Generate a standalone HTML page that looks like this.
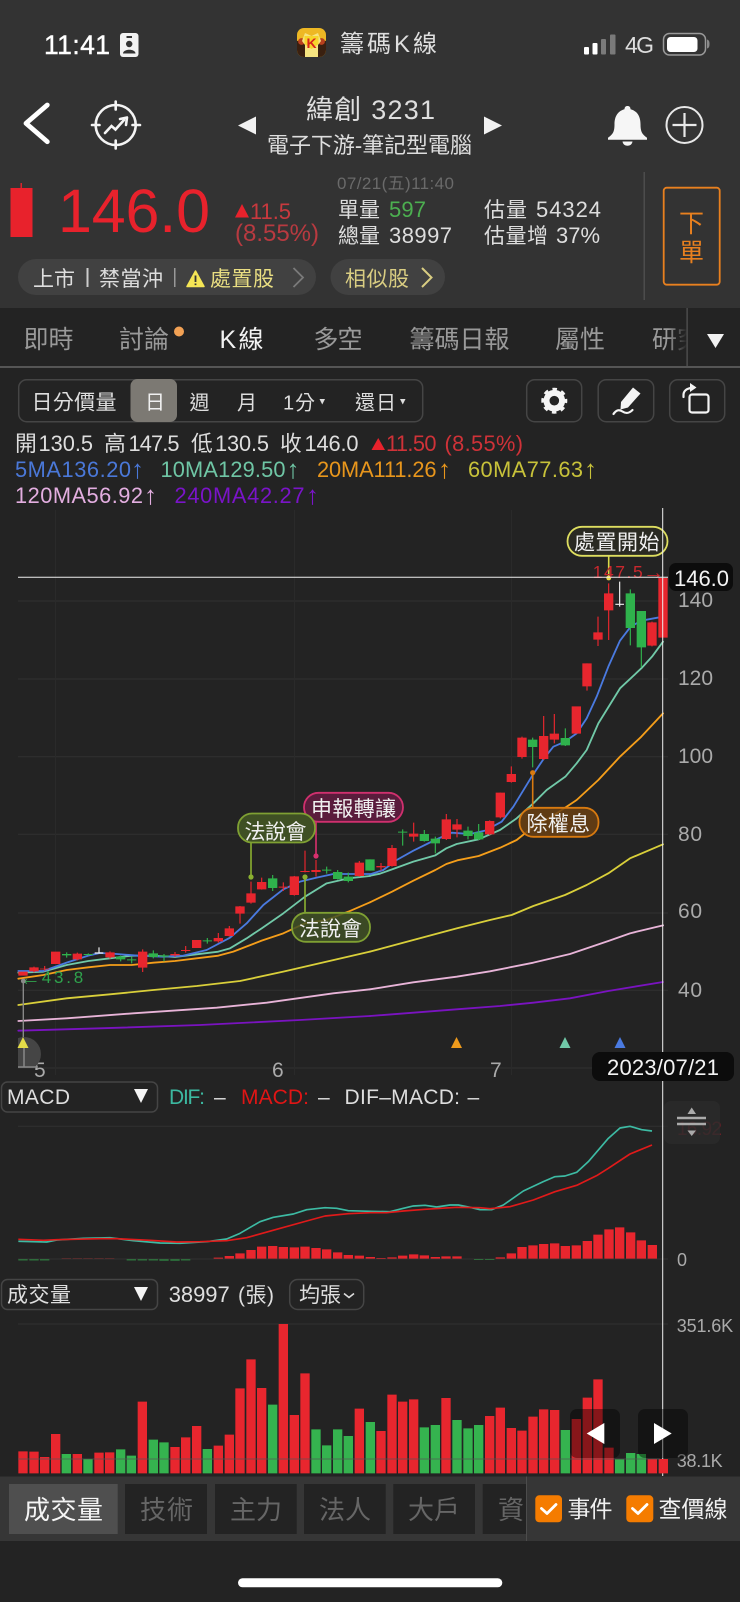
<!DOCTYPE html>
<html lang="zh-Hant">
<head>
<meta charset="utf-8">
<title>籌碼K線</title>
<style>
html,body{margin:0;padding:0;background:#232323;width:740px;height:1602px;overflow:hidden}
svg{display:block;position:absolute;left:0;top:0}
text{font-family:"Liberation Sans","Noto Sans CJK TC",sans-serif;fill:#dedede;white-space:pre}
.g{fill:#aaa}
.tab{fill:#999}
.r{fill:#e22a30}
.w{fill:#eee}
</style>
</head>
<body>
<svg width="740" height="1602" viewBox="0 0 740 1602" xmlns="http://www.w3.org/2000/svg">
<defs>
<linearGradient id="fade" x1="0" x2="1" y1="0" y2="0"><stop offset="0" stop-color="#232323" stop-opacity="0"/><stop offset="1" stop-color="#232323"/></linearGradient>
<clipPath id="cc"><rect x="18" y="1030" width="40" height="38"/></clipPath>
<clipPath id="appc"><rect x="297" y="28" width="29" height="29" rx="7"/></clipPath>
</defs>

<!-- backgrounds -->
<rect width="740" height="1602" fill="#232323"/>
<rect width="740" height="308" fill="#333333"/>

<!-- status bar -->
<text x="44" y="54" font-size="26.500" textLength="66" stroke="#fff" stroke-width=".4" style="fill:#fff">11:41</text>
<rect x="120" y="33" width="18.500" height="24" rx="3" fill="#f2f2f2"/>
<rect x="126.500" y="36" width="5.500" height="2" fill="#333"/>
<circle cx="129.200" cy="44" r="3.200" fill="#333"/>
<path d="M123 53.500c0-5 12.500-5 12.500 0z" fill="#333"/>

<g clip-path="url(#appc)">
<rect x="297" y="28" width="29" height="29" fill="#eeb824"/>
<path d="M297 41l8-2 1 18h-9zM326 41l-8-2-1 18h9z" fill="#3a2010"/>
<circle cx="301.500" cy="41.500" r="3.400" fill="#b8401e"/>
<circle cx="321.500" cy="41.500" r="3.400" fill="#b8401e"/>
<path d="M305 33l6.500 3 6.500-3 3 8-3 4v12h-13V45l-3-4z" fill="#f6e480"/>
<path d="M304.500 36h14v8l-7 5-7-5z" fill="#f7d52a"/>
</g>
<text x="311.500" y="48" font-size="14" font-weight="bold" text-anchor="middle" style="fill:#d8241c">K</text>
<text x="340" y="52" font-size="24" textLength="97">籌碼K線</text>

<rect x="584" y="47" width="5" height="7.500" rx="1" fill="#fff"/>
<rect x="592.500" y="43" width="5" height="11.500" rx="1" fill="#fff"/>
<rect x="601" y="39" width="5" height="15.500" rx="1" fill="#7a7a7a"/>
<rect x="610" y="34.500" width="5.500" height="20" rx="1" fill="#7a7a7a"/>
<text x="625" y="53" font-size="23" textLength="29">4G</text>
<rect x="663.500" y="33.500" width="42" height="21.500" rx="6" fill="none" stroke="#9a9a9a" stroke-width="1.500"/>
<rect x="667" y="37" width="30.500" height="15" rx="3.500" fill="#fff"/>
<path d="M707 39.500c2 .5 2.500 2 2.500 4.500s-.5 4-2.500 4.500z" fill="#8a8a8a"/>

<!-- nav row -->
<path d="M47.300 105L26 123.300 47.300 141.700" fill="none" stroke="#fff" stroke-width="4.800" stroke-linecap="round" stroke-linejoin="round"/>
<g fill="none" stroke="#f4f4f4" stroke-width="2.600" stroke-linecap="round">
<circle cx="115.700" cy="125" r="20"/>
<path d="M115.700 101.500v8M115.700 140.500v8M92 125h7.500M132.500 125h7.500"/>
<path d="M105 133l6.500-7 4 3.500 8.500-9.500"/>
<path d="M120 119l7-1.500-1 7.500" stroke-linejoin="round"/>
</g>
<polygon points="256,116.500 256,134.500 238,125.500" fill="#f2f2f2"/>
<polygon points="484,116.500 484,134.500 502,125.500" fill="#f2f2f2"/>
<text x="306" y="119" font-size="27" textLength="129">緯創 3231</text>
<text x="267" y="153" font-size="22" textLength="205">電子下游-筆記型電腦</text>
<path d="M627.500 106c-2 0-3 1.300-3 3.200-7.500 2-10 8.200-10 15 0 7.500-1.500 10-6.500 13.500v2h39v-2c-5-3.500-6.500-6-6.500-13.500 0-6.800-2.500-13-10-15 0-1.900-1-3.200-3-3.200z" fill="#f6f6f6"/>
<path d="M622.500 141.500h10c-.5 3-2.500 4.200-5 4.200s-4.500-1.200-5-4.200z" fill="#f6f6f6"/>
<circle cx="684.500" cy="125" r="18" fill="none" stroke="#e8e8e8" stroke-width="2"/>
<path d="M672.500 125h24M684.500 113v24" stroke="#e8e8e8" stroke-width="2.200" fill="none"/>

<!-- quote -->
<rect x="20.500" y="183" width="1.400" height="6" fill="#e8222c"/>
<rect x="10.500" y="188" width="22" height="49" fill="#e8222c"/>
<text x="58" y="232" font-size="61" textLength="152" style="fill:#e8222c">146.0</text>
<polygon points="235,217.500 249,217.500 242,204" fill="#e8222c"/>
<text x="250" y="219" font-size="22" textLength="41" style="fill:#c8393e">11.5</text>
<text x="235" y="241" font-size="24" textLength="84" style="fill:#b83a40">(8.55%)</text>
<text x="337" y="189" font-size="17" textLength="117" style="fill:#6a6a6a">07/21(五)11:40</text>
<text x="338" y="217" font-size="21" textLength="42">單量</text>
<text x="389" y="217" font-size="22" textLength="37" style="fill:#4caf50">597</text>
<text x="338" y="243" font-size="21" textLength="42">總量</text>
<text x="389" y="243" font-size="22" textLength="63">38997</text>
<text x="484" y="217" font-size="21" textLength="43">估量</text>
<text x="536" y="217" font-size="22" textLength="65">54324</text>
<text x="484" y="243" font-size="21" textLength="64">估量增</text>
<text x="556" y="243" font-size="22" textLength="44">37%</text>
<rect x="643.500" y="172" width="1.500" height="128" fill="#4c4c4c"/>
<rect x="663.700" y="187.700" width="56" height="97" rx="3" fill="none" stroke="#e8801f" stroke-width="1.800"/>
<text x="691.500" y="232" font-size="25" text-anchor="middle" style="fill:#e8801f">下</text>
<text x="691.500" y="261" font-size="25" text-anchor="middle" style="fill:#e8801f">單</text>

<!-- pills -->
<rect x="18" y="259" width="298" height="36" rx="18" fill="#414141"/>
<rect x="330.500" y="259" width="114.500" height="36" rx="18" fill="#414141"/>
<text x="33" y="286" font-size="21" textLength="42">上市</text>
<rect x="86.500" y="268" width="2" height="19" fill="#ccc"/>
<text x="99" y="286" font-size="21" textLength="64">禁當沖</text>
<rect x="174" y="268" width="1.500" height="19" fill="#999"/>
<path d="M195.500 271l8.500 15.500h-17z" fill="#f5e655" stroke="#f5e655" stroke-width="1.500" stroke-linejoin="round"/>
<path d="M195.500 275.500v6.500M195.500 283.500v1.600" stroke="#333" stroke-width="1.800"/>
<text x="210" y="286" font-size="21" textLength="64" style="fill:#e9de82">處置股</text>
<path d="M293.500 268l9.500 9.500-9.500 9.500" fill="none" stroke="#7a7a7a" stroke-width="1.800"/>
<text x="345" y="286" font-size="21" textLength="64" style="fill:#d9cd82">相似股</text>
<path d="M422 268l9.500 9.500-9.500 9.500" fill="none" stroke="#d9cd82" stroke-width="2"/>

<!-- tabs -->
<text x="23.500" y="348" font-size="25" textLength="50" style="fill:#999">即時</text>
<text x="119" y="348" font-size="25" textLength="50" style="fill:#999">討論</text>
<circle cx="179" cy="331.500" r="5" fill="#f2a154"/>
<text x="219.500" y="348" font-size="25" textLength="44" style="fill:#f2f2f2">K線</text>
<text x="313.500" y="348" font-size="25" textLength="49" style="fill:#999">多空</text>
<text x="409.500" y="348" font-size="25" textLength="100" style="fill:#999">籌碼日報</text>
<text x="555" y="348" font-size="25" textLength="50" style="fill:#999">屬性</text>
<text x="652" y="348" font-size="25" textLength="50" style="fill:#999">研究</text>
<rect x="668" y="320" width="19" height="40" fill="url(#fade)"/>
<rect x="687" y="325" width="53" height="41" fill="#232323"/>
<rect x="686.500" y="308" width="1.200" height="59" fill="#555"/>
<polygon points="707,334 724,334 715.500,348" fill="#f2f2f2"/>
<rect x="0" y="366" width="740" height="2" fill="#555"/>

<!-- toolbar -->
<rect x="18.700" y="379.700" width="404" height="42" rx="8" fill="none" stroke="#454545" stroke-width="1.500"/>
<rect x="130.500" y="379" width="46.500" height="43" rx="7" fill="#7c7973"/>
<text x="31.500" y="409.500" font-size="21" textLength="85">日分價量</text>
<text x="145" y="409" font-size="20" textLength="16" style="fill:#f0f0f0">日</text>
<text x="189.500" y="409.500" font-size="20" textLength="20">週</text>
<text x="237" y="409.500" font-size="20" textLength="18">月</text>
<text x="283" y="409.500" font-size="20" textLength="32">1分</text>
<polygon points="319.500,399 325,399 322.250,404.500" fill="#ddd"/>
<text x="355" y="409.500" font-size="20" textLength="41">還日</text>
<polygon points="400,399 405.500,399 402.750,404.500" fill="#ddd"/>

<rect x="526.700" y="379.700" width="55" height="42" rx="8" fill="none" stroke="#454545" stroke-width="1.500"/>
<rect x="598.200" y="379.700" width="55.500" height="42" rx="8" fill="none" stroke="#454545" stroke-width="1.500"/>
<rect x="669.700" y="379.700" width="55" height="42" rx="8" fill="none" stroke="#454545" stroke-width="1.500"/>
<circle cx="554.300" cy="400.700" r="7.800" fill="none" stroke="#f4f4f4" stroke-width="6"/>
<circle cx="554.300" cy="400.700" r="11.300" fill="none" stroke="#f4f4f4" stroke-width="3.400" stroke-dasharray="4.440 4.440" stroke-dashoffset="2.200"/>
<path d="M633 387.500l7.500 6-12.500 14-7.500 2 .5-7.500z" fill="#f4f4f4"/>
<path d="M613.500 414c3-4.500 6-4.500 9-2.500s6 2.500 10-1.500" fill="none" stroke="#f4f4f4" stroke-width="2.200" stroke-linecap="round"/>
<rect x="689.500" y="394.500" width="19" height="18" rx="2.500" fill="none" stroke="#f4f4f4" stroke-width="2.200"/>
<path d="M683.500 397v-2c0-4 3-6.500 8-7" fill="none" stroke="#f4f4f4" stroke-width="2.200" stroke-linecap="round"/>
<polygon points="690,383 696.500,387.500 690,392" fill="#f4f4f4"/>

<!-- OHLC text -->
<g font-size="21.800">
<text x="15" y="451">開</text><text x="38.500" y="451" textLength="54.500">130.5</text>
<text x="104" y="451">高</text><text x="128.500" y="451" textLength="51">147.5</text>
<text x="191" y="451">低</text><text x="215" y="451" textLength="54">130.5</text>
<text x="280" y="451">收</text><text x="304.500" y="451" textLength="54">146.0</text>
<text x="386" y="451" textLength="50.500" style="fill:#cf3238">11.50</text>
<text x="444.500" y="451" textLength="78.500" style="fill:#cf3238">(8.55%)</text>
<text x="15" y="477" textLength="116" style="fill:#4a78d8">5MA136.20</text>
<text x="160.500" y="477" textLength="125" style="fill:#6fc6a5">10MA129.50</text>
<text x="317" y="477" textLength="119.500" style="fill:#e8961c">20MA111.26</text>
<text x="468" y="477" textLength="115" style="fill:#c8c23a">60MA77.63</text>
<text x="15" y="503" textLength="128" style="fill:#e3aee0">120MA56.92</text>
<text x="174.500" y="503" textLength="130" style="fill:#7a14c8">240MA42.27</text>
</g>
<polygon points="371.500,450 385,450 378.250,438" fill="#e8222c"/>
<g font-size="26" text-anchor="middle">
<text x="137.500" y="478" style="fill:#4a78d8">↑</text>
<text x="293" y="478" style="fill:#6fc6a5">↑</text>
<text x="444.500" y="478" style="fill:#e8961c">↑</text>
<text x="590.500" y="478" style="fill:#c8c23a">↑</text>
<text x="150.500" y="504" style="fill:#e3aee0">↑</text>
<text x="312.500" y="504" style="fill:#7a14c8">↑</text>
</g>

<!-- chart grid -->
<g stroke="#313131" stroke-width="1" fill="none">
<path d="M18 601H668M18 679H668M18 756.700H668M18 834.300H668M18 913H668M18 990.300H668M18 1068H668M18 1126.300H668M18 1259H668M18 1324H668"/>
</g>
<path d="M55.500 510V1075M294.500 510V1075M511.500 510V1075" stroke="#2a2a2a" fill="none"/>

<!-- axis labels -->
<g font-size="21">
<text x="678" y="607" textLength="35" style="fill:#aaa">140</text>
<text x="678" y="685" textLength="35" style="fill:#aaa">120</text>
<text x="678" y="763" textLength="35" style="fill:#aaa">100</text>
<text x="678" y="841" textLength="24" style="fill:#aaa">80</text>
<text x="678" y="918" textLength="24" style="fill:#aaa">60</text>
<text x="678" y="997" textLength="24" style="fill:#aaa">40</text>
<text x="34" y="1077" style="fill:#aaa">5</text>
<text x="272" y="1077" style="fill:#aaa">6</text>
<text x="490" y="1077" style="fill:#aaa">7</text>
</g>

<!-- MA lines: left part -->
<g transform="translate(0,780) scale(.33333)" fill="none" stroke-width="5.500" stroke-linejoin="round" stroke-linecap="round">
<polyline stroke="#7a13c0" points="55,752 300,745 600,735 900,720 1110,708"/>
<polyline stroke="#e8b4d8" points="55,723 200,715 400,700 650,683 800,668 1000,640 1110,628"/>
<polyline stroke="#d9cf3a" points="55,675 200,655 330,643 460,630 590,618 720,603 850,575 980,545 1110,515"/>
<polyline stroke="#f59e1a" points="55,596 130,585 200,570 265,562 330,555 395,555 460,548 525,543 590,535 655,527 700,515 785,482 850,460 915,430 980,420 1045,395 1110,367"/>
<polyline stroke="#71c9a8" points="55,578 130,575 200,555 265,543 330,535 395,527 460,527 525,531 590,523 655,515 690,505 740,475 785,445 850,400 915,350 980,310 1045,295 1110,288"/>
<polyline stroke="#4a7ae0" points="55,573 130,573 200,548 265,527 300,519 350,522 415,527 490,530 550,527 620,510 690,473 740,430 790,375 850,328 900,305 950,293 1000,282 1060,282 1110,282"/>
</g>
<!-- MA lines: right part -->
<g transform="translate(370,780) scale(.33333)" fill="none" stroke-width="5.500" stroke-linejoin="round" stroke-linecap="round">
<polyline stroke="#7a13c0" points="0,708 130,698 260,688 390,678 490,668 600,655 715,633 879,606"/>
<polyline stroke="#e8b4d8" points="0,628 130,607 260,590 360,574 490,548 600,522 715,483 780,460 879,436"/>
<polyline stroke="#d9cf3a" points="0,515 130,480 260,445 360,420 425,405 490,378 585,345 650,315 715,280 780,235 879,193"/>
<polyline stroke="#f59e1a" points="0,367 66,335 130,302 196,270 229,252 262,241 326,228 391,203 440,180 490,140 545,110 620,60 685,0 750,-70 814,-130 879,-200"/>
<polyline stroke="#71c9a8" points="0,287 30,281 66,268 130,245 196,226 229,205 260,192 326,178 390,150 440,115 490,70 530,30 586,-10 620,-50 650,-90 685,-170 750,-275 814,-335 846,-370 879,-415"/>
<polyline stroke="#4a7ae0" points="0,283 40,270 80,240 130,212 195,180 245,158 300,162 345,152 395,125 430,80 485,-10 520,-62 550,-100 585,-115 620,-140 650,-185 680,-250 715,-340 750,-418 782,-460 814,-478 846,-484 879,-490"/>
</g>

<!-- candles -->
<g fill="none">
<g transform="translate(0,780) scale(.33333)">
<path stroke="#e8262e" stroke-width="3.500" d="M102 560V577M134 558V572M232 518V541M330 514V536M428 508V576M525 516V530M557 498V518M655 459V488M688 438V470M720 378V431M753 305V371M785 293V329M850 307V333M883 288V347M915 212V277M948 240V290M1078 243V290"/>
<path stroke="#e8262e" stroke-width="28" d="M69 575V587M102 562V574M134 566V568M167 515V552M232 521V538M330 517V532M428 515V563M525 522V526M557 510V513M590 480V504M655 474V484M688 445V468M720 379V401M753 340V368M785 306V328M850 320V323M883 289V345M915 273V276M948 270V276M1078 248V288"/>
<path stroke="#2fb24c" stroke-width="3.500" d="M200 517V533M265 520V526M362 527V544M395 530V550M460 511V535M492 522V544M622 474V491M818 285V333M980 260V281M1013 270V299M1045 278V307M1110 238V272"/>
<path stroke="#2fb24c" stroke-width="28" d="M200 522V526M265 522V525M362 530V538M395 538V541M460 520V531M492 526V530M622 481V484M818 295V324M980 269V272M1013 276V297M1045 290V303M1110 238V272"/>
<path stroke="#f0f0f0" stroke-width="3.500" d="M297 502V520M284 519H310"/>
</g>
<g transform="translate(370,780) scale(.33333)">
<path stroke="#e8262e" stroke-width="3.500" d="M33 249V272M66 195V260M131 128V185M229 102V180M261 117V172M359 121V165M391 38V115"/>
<path stroke="#e8262e" stroke-width="28" d="M33 258V262M66 204V258M131 161V170M229 118V177M261 133V149M359 123V163M391 38V112"/>
<path stroke="#2fb24c" stroke-width="3.500" d="M98 148V197M163 150V185M196 170V220M294 140V178M326 132V180"/>
<path stroke="#2fb24c" stroke-width="28" d="M98 155V158M163 162V183M196 176V190M294 152V168M326 157V178"/>
</g>
<g transform="translate(370,510) scale(.33333)">
<path stroke="#e8262e" stroke-width="3.500" d="M424 769V818M456 680V746M521 618V750M553 612V700M651 460V542M684 320V408M716 220V390M846 335V409"/>
<path stroke="#e8262e" stroke-width="28" d="M424 792V816M456 683V741M521 678V747M553 671V689M619 589V671M651 460V529M684 367V389M716 250V301M846 337V407M879 204V383"/>
<path stroke="#2fb24c" stroke-width="3.500" d="M488 683V772M586 655V708M781 238V406M814 303V472"/>
<path stroke="#2fb24c" stroke-width="28" d="M488 689V711M586 684V706M781 250V354M814 303V412"/>
<path stroke="#f0f0f0" stroke-width="3.500" d="M749 215V290M736 283H762"/>
</g>
</g>

<!-- event markers and labels -->
<path d="M251 843V877" stroke="#8ab030" stroke-width="1.600"/><circle cx="251" cy="877" r="2.600" fill="#8ab030"/>
<path d="M305 877V912" stroke="#8ab030" stroke-width="1.600"/><circle cx="305" cy="877" r="2.600" fill="#8ab030"/>
<path d="M316 822V856" stroke="#d8306e" stroke-width="1.600"/><circle cx="316" cy="856" r="2.600" fill="#d8306e"/>
<path d="M532.700 772.700V807" stroke="#d87a10" stroke-width="1.600"/><circle cx="532.700" cy="772.700" r="2.600" fill="#d87a10"/>
<path d="M608.700 556V578" stroke="#d9d94a" stroke-width="1.600"/><circle cx="608.700" cy="578" r="2.400" fill="#e8d94a"/>
<text x="592.700" y="578" font-size="17.500" textLength="50" style="fill:#c8282e">147.5</text>
<text x="653.500" y="579" font-size="21" text-anchor="middle" style="fill:#c8282e">→</text>

<rect x="304" y="792.800" width="99" height="29" rx="14.500" fill="#5a1c3c" stroke="#d0306e" stroke-width="1.800"/>
<rect x="238" y="813.500" width="77" height="29" rx="14" fill="#3f5024" stroke="#7fa033" stroke-width="1.800"/>
<rect x="292" y="912.800" width="78" height="29" rx="14" fill="#3f5024" fill-opacity=".85" stroke="#7fa033" stroke-width="1.800"/>
<rect x="519.500" y="807.800" width="79" height="29" rx="14" fill="#6a4012" fill-opacity=".85" stroke="#d87a10" stroke-width="1.800"/>
<rect x="567.500" y="526.800" width="100" height="29" rx="14.500" fill="#2a2a22" stroke="#dede60" stroke-width="1.800"/>
<g font-size="21">
<text x="311" y="816" textLength="85" style="fill:#f0f0f0">申報轉讓</text>
<text x="244.500" y="839" textLength="62" style="fill:#f0f0f0">法說會</text>
<text x="299" y="936" textLength="63" style="fill:#f0f0f0">法說會</text>
<text x="526.500" y="831" textLength="63.500" style="fill:#f0f0f0">除權息</text>
<text x="574" y="549.500" textLength="85.500" style="fill:#f0f0f0">處置開始</text>
</g>

<!-- low marker -->
<text x="30" y="985" font-size="22" text-anchor="middle" style="fill:#2fa24c">←</text>
<text x="41.700" y="983" font-size="17" textLength="41.500" style="fill:#2fa24c">43.8</text>
<circle cx="23.300" cy="981" r="2.400" fill="#888"/>
<path d="M23.300 981V1040" stroke="#888" stroke-width="1.400"/>
<g clip-path="url(#cc)">
<circle cx="24" cy="1054" r="17" fill="#454545"/>
<path d="M24 1048V1067M18 1067H38" stroke="#888" stroke-width="1.500"/>
</g>
<polygon points="17.500,1048 28.500,1048 23,1037" fill="#e4dc48"/>
<polygon points="451,1048 462,1048 456.500,1037" fill="#ee9a1c"/>
<polygon points="559.500,1048 570.500,1048 565,1037" fill="#71c9a8"/>
<polygon points="614.500,1048 625.500,1048 620,1037" fill="#4a7ae0"/>

<!-- crosshair -->
<path d="M662.700 508V1052M662.700 1080V1476" stroke="#eee" stroke-width="1"/>
<path d="M18 577.300H668" stroke="#eee" stroke-width="1"/>
<rect x="669" y="563" width="64" height="28" rx="7" fill="#0c0c0c"/>
<text x="674" y="586" font-size="22" textLength="55" style="fill:#f4f4f4">146.0</text>
<rect x="592" y="1052" width="142" height="29" rx="8" fill="#0c0c0c"/>
<text x="607" y="1075" font-size="22" textLength="112" style="fill:#f4f4f4">2023/07/21</text>

<!-- MACD header -->
<rect x="1.500" y="1082" width="156" height="30" rx="6" fill="none" stroke="#454545" stroke-width="1.500"/>
<text x="7" y="1104" font-size="21" textLength="63">MACD</text>
<polygon points="134,1089 148,1089 141,1103" fill="#f4f4f4"/>
<g font-size="21">
<text x="169" y="1104" textLength="36" style="fill:#3cb8a0">DIF:</text>
<text x="214" y="1104" textLength="11">–</text>
<text x="241" y="1104" textLength="68" style="fill:#e01515">MACD:</text>
<text x="318" y="1104" textLength="11">–</text>
<text x="344.500" y="1104" textLength="115.500">DIF–MACD:</text>
<text x="467.500" y="1104" textLength="11">–</text>
</g>

<!-- MACD chart -->
<text x="677" y="1266" font-size="18" style="fill:#aaa">0</text>
<g transform="translate(0,1060) scale(.33333)" fill="none">
<path stroke="#e8262e" stroke-width="28" d="M655 593V596M688 588V596M720 580V596M753 570V596M785 560V596M818 558V596M850 561V596M883 562V596M915 560V596M948 564V596M980 568V596M1013 577V596M1045 585V596M1078 587V596M1111 591V596M1143 594V596M1176 592V596M1208 587V596M1241 583V596M1273 586V596M1306 591V596M1338 589V596M1371 589V596M1501 592V596M1534 580V596M1566 561V596M1599 556V596M1631 552V596M1664 550V596M1696 558V596M1729 556V596M1762 543V596M1794 524V596M1827 508V596M1859 502V596M1892 517V596M1924 541V596M1957 555V596"/>
<path stroke="#6a2a2a" stroke-width="28" d="M199 594V596M232 594V596M264 594V596M297 594V596M329 594V596"/>
<path stroke="#2f8f44" stroke-width="28" d="M69 598V601M102 598V601M134 598V601M394 598V601M427 598V601M460 598V601M492 598V602M525 598V602M557 598V601M1436 598V600M1469 598V600"/>
<polyline stroke="#3dbba4" stroke-width="5" stroke-linejoin="round" points="55,544 140,546 170,540 250,535 330,533 400,542 480,549 540,550 620,545 680,537 720,520 780,485 820,472 880,462 920,449 975,443 1010,445 1045,452 1110,454 1170,455 1210,445 1240,438 1275,436 1310,441 1350,435 1375,435 1410,442 1440,449 1475,449 1510,435 1570,393 1630,365 1665,350 1695,348 1730,337 1765,305 1825,235 1860,204 1890,199 1925,209 1956,213"/>
<polyline stroke="#e01a1a" stroke-width="5" stroke-linejoin="round" points="55,538 130,541 170,539 300,536 350,536 450,541 530,546 600,545 680,542 740,533 830,508 920,483 975,468 1045,461 1110,458 1160,458 1210,453 1275,448 1370,442 1440,443 1470,446 1530,440 1600,420 1665,395 1730,376 1790,347 1825,325 1890,282 1956,255"/>
</g>

<!-- scale handle -->
<text x="677" y="1135" font-size="19" textLength="45" style="fill:#6a2028">16.92</text>
<rect x="664" y="1101" width="56" height="43" rx="7" fill="#2c2c2c" fill-opacity=".75"/>
<polygon points="691.700,1107.500 687.500,1114 696,1114" fill="#aaa"/>
<path d="M677 1118H706M677 1124H706" stroke="#aaa" stroke-width="2.400"/>
<polygon points="691.700,1136 687.500,1130.500 696,1130.500" fill="#aaa"/>

<!-- volume header -->
<rect x="1.500" y="1279.500" width="156" height="30" rx="6" fill="none" stroke="#454545" stroke-width="1.500"/>
<text x="7" y="1302" font-size="21" textLength="64">成交量</text>
<polygon points="134,1287 148,1287 141,1301" fill="#f4f4f4"/>
<text x="168.700" y="1302" font-size="22" textLength="61">38997</text>
<text x="238" y="1302" font-size="21" textLength="36">(張)</text>
<rect x="289.700" y="1279.500" width="74" height="30" rx="8" fill="#232323" stroke="#454545" stroke-width="1.500"/>
<text x="299" y="1302" font-size="21" textLength="42">均張</text>
<path d="M344 1293.500l5 4 5-4" fill="none" stroke="#ddd" stroke-width="1.600"/>

<!-- volume bars -->
<g transform="translate(0,1310) scale(.33333)" fill="none" stroke-width="28">
<path stroke="#e8262e" d="M69 424V490M102 425V490M134 441V490M167 372V490M232 432V490M297 428V490M329 427V490M427 275V490M525 411V490M557 382V490M590 348V490M655 407V490M688 374V490M720 235V490M753 148V490M785 234V490M850 42V490M883 315V490M915 190V490M1078 296V490M1143 363V490M1176 254V490M1208 275V490M1241 268V490M1338 264V490M1469 318V490M1501 293V490M1534 354V490M1566 362V490M1599 320V490M1631 298V490M1664 300V490M1729 327V490M1762 263V490M1794 208V490M1827 413V490M1957 447V490M1990 447V490"/>
<path stroke="#35b34f" d="M199 432V490M264 447V490M362 418V490M394 437V490M460 389V490M492 397V490M622 417V490M818 284V490M948 358V490M980 406V490M1013 358V490M1045 378V490M1111 336V490M1273 352V490M1306 345V490M1371 330V490M1404 355V490M1436 345V490M1696 360V490M1859 448V490M1892 429V490M1924 432V490"/>
</g>
<path d="M18 1459H660" stroke="#555" stroke-opacity=".7" stroke-width="1"/>
<text x="676.700" y="1332" font-size="18" textLength="56.500" style="fill:#aaa">351.6K</text>
<text x="676.700" y="1467" font-size="18" textLength="46" style="fill:#aaa">38.1K</text>

<!-- chart arrows -->
<rect x="570" y="1409" width="50" height="49" rx="7" fill="#000" fill-opacity=".42"/>
<rect x="638" y="1409" width="50" height="49" rx="7" fill="#000" fill-opacity=".42"/>
<polygon points="604.300,1423 604.300,1444 586.700,1433.500" fill="#fff"/>
<polygon points="654,1423 654,1444 671.700,1433.500" fill="#fff"/>

<!-- bottom bar -->
<rect x="0" y="1476.500" width="740" height="64.500" fill="#363636"/>
<rect x="9" y="1484" width="108.700" height="50" fill="#4f4f4f"/>
<rect x="125" y="1484" width="82" height="50" fill="#232323"/>
<rect x="215" y="1484" width="81.700" height="50" fill="#232323"/>
<rect x="304" y="1484" width="81.700" height="50" fill="#232323"/>
<rect x="393.300" y="1484" width="81.700" height="50" fill="#232323"/>
<rect x="482.700" y="1484" width="43" height="50" fill="#232323"/>
<text x="24" y="1519" font-size="26" textLength="79" style="fill:#f4f4f4">成交量</text>
<g font-size="26">
<text x="140" y="1519" textLength="53" style="fill:#666">技術</text>
<text x="230" y="1519" textLength="52" style="fill:#666">主力</text>
<text x="319" y="1519" textLength="52" style="fill:#666">法人</text>
<text x="408" y="1519" textLength="52" style="fill:#666">大戶</text>
<text x="498" y="1519" style="fill:#666">資</text>
</g>
<rect x="523" y="1484" width="3" height="50" fill="#232323"/>
<rect x="526" y="1476.500" width="214" height="64.500" fill="#363636"/>
<rect x="526" y="1476.500" width="1" height="64.500" fill="#4c4c4c"/>
<rect x="535.300" y="1495.300" width="26.700" height="27" rx="4" fill="#f57c00"/>
<path d="M541.500 1508.500l5.500 5 9-9" fill="none" stroke="#fff" stroke-width="2.800" stroke-linecap="round" stroke-linejoin="round"/>
<text x="567.500" y="1517" font-size="23" textLength="45" style="fill:#f0f0f0">事件</text>
<rect x="626.300" y="1495.300" width="27" height="27" rx="4" fill="#f57c00"/>
<path d="M632.500 1508.500l5.500 5 9-9" fill="none" stroke="#fff" stroke-width="2.800" stroke-linecap="round" stroke-linejoin="round"/>
<text x="658.500" y="1517" font-size="23" textLength="69" style="fill:#f0f0f0">查價線</text>

<!-- home indicator -->
<rect x="238" y="1578.300" width="264.300" height="9" rx="4.500" fill="#fff"/>
</svg>
</body>
</html>
